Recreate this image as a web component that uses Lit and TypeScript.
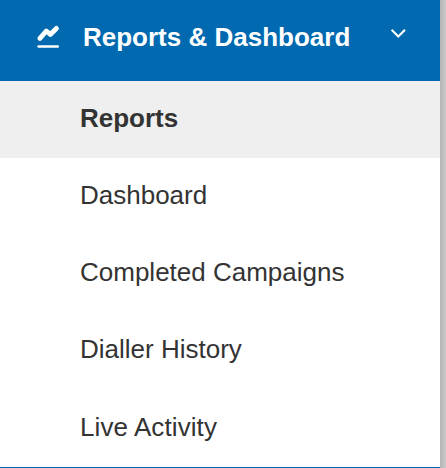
import { LitElement, html, css } from "lit";
import { customElement, property } from "lit/decorators.js";
import { classMap } from "lit/directives/class-map.js";

@customElement("app-root")
export class AppRoot extends LitElement {
  static styles = css`
    :host {
      display: flex;
      box-sizing: border-box;
      width: 446px;
      height: 468px;
      overflow: hidden;
      background: #fff;
      color: #333;
      font: 26px/30px "Liberation Sans", Arial, sans-serif;
    }
    .menu {
      flex: 1;
      min-width: 0;
      display: flex;
      flex-direction: column;
    }
    .edge {
      width: 6px;
      background: linear-gradient(to right, #b5b5b5, #c9c9c9);
    }
    .header {
      display: flex;
      align-items: flex-start;
      box-sizing: border-box;
      flex: none;
      height: 81px;
      padding: 22px 32px 0 35px;
      background: #0069af;
      color: #fff;
      font-weight: 700;
    }
    .chart {
      width: 28px;
      height: 28px;
      margin-right: 20px;
    }
    .title {
      flex: 1;
      white-space: nowrap;
    }
    .chevron {
      width: 20px;
      height: 24px;
    }
    .list {
      flex: none;
      margin: 0;
      padding: 0;
      list-style: none;
    }
    .item {
      box-sizing: border-box;
      height: 77px;
      padding: 22px 0 0 80px;
      white-space: nowrap;
    }
    .item:last-child {
      height: 78px;
      padding-top: 23px;
      letter-spacing: 0.09px;
    }
    .active {
      background: #efefef;
      font-weight: 700;
    }
    .next {
      flex: none;
      height: 1px;
      background: #0069af;
    }
  `;

  @property({ attribute: false })
  items = ["Reports", "Dashboard", "Completed Campaigns", "Dialler History", "Live Activity"];

  @property()
  selected = "Reports";

  render() {
    return html`
      <nav class="menu">
        <div class="header">
          <svg class="chart" viewBox="0 0 28 28" fill="none" stroke="#fff" stroke-linecap="round" stroke-linejoin="round">
            <path d="M4.9 16.3 L11.3 9 L15.3 12.4 L21.4 6.4" stroke-width="4.9" />
            <path d="M3.7 24.5 H22.7" stroke-width="2.7" />
          </svg>
          <span class="title">Reports &amp; Dashboard</span>
          <svg class="chevron" viewBox="0 0 20 24" fill="none" stroke="#fff">
            <path d="M3.6 7.8 L10.3 14.5 L17 7.8" stroke-width="2.1" />
          </svg>
        </div>
        <ul class="list">
          ${this.items.map(
            (item) => html`<li class=${classMap({ item: true, active: item === this.selected })}>${item}</li>`
          )}
        </ul>
        <div class="next"></div>
      </nav>
      <div class="edge"></div>
    `;
  }
}
